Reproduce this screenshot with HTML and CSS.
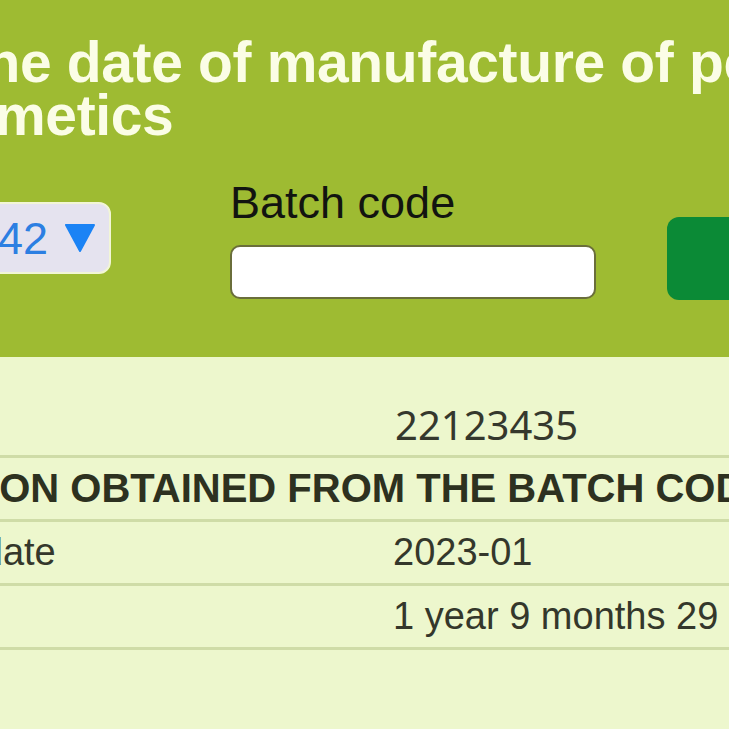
FILE: index.html
```html
<!DOCTYPE html>
<html lang="en">
<head>
<meta charset="utf-8">
<title>Check the date of manufacture</title>
<link rel="stylesheet" href="styles.css">
</head>
<body>
<div class="page">
  <header class="hero">
    <h1 class="title">Check the date of manufacture of perfume<br>and cosmetics</h1>
    <form class="search" onsubmit="return false">
      <div class="select">
        <span class="select-value">Brand 2042</span>
        <svg class="select-arrow" width="30" height="28" viewBox="0 0 30 28"><polygon points="1,1 29,1 15,27" fill="#1b83f5" stroke="#1b83f5" stroke-width="2" stroke-linejoin="round"/></svg>
      </div>
      <div class="field">
        <label class="field-label" for="code">Batch code</label>
        <input class="field-input" id="code" type="text">
      </div>
      <button class="submit" type="submit">Check</button>
    </form>
  </header>
  <div class="results">
    <div class="row">
      <div class="cell label">Batch code</div>
      <div class="cell value mono">22123435</div>
    </div>
    <div class="row">
      <div class="cell head">INFORMATION OBTAINED FROM THE BATCH CODE</div>
    </div>
    <div class="row">
      <div class="cell label">Manufacture date</div>
      <div class="cell value">2023-01</div>
    </div>
    <div class="row">
      <div class="cell label">Age</div>
      <div class="cell value">1 year 9 months 29 days</div>
    </div>
  </div>
</div>
</body>
</html>
```
FILE: styles.css
```css
html, body {
  margin: 0;
  padding: 0;
}
body {
  background: #edf7cd;
  overflow: hidden;
  font-family: "Liberation Sans", Arial, sans-serif;
}
.page {
  margin-left: -240px;
  width: 1240px;
}
.hero {
  background: #9ebb32;
  padding: 36px 0 57px 0;
}
.title {
  margin: 0 0 38px 0;
  padding-left: 22px;
  font-size: 57px;
  line-height: 53px;
  font-weight: bold;
  letter-spacing: -0.35px;
  color: #fbfde6;
  white-space: nowrap;
}
.search {
  display: flex;
  align-items: flex-start;
  padding-left: 80px;
}
.select {
  box-sizing: border-box;
  width: 271px;
  height: 72px;
  margin-top: 22px;
  background: #e5e3ef;
  border: 2px solid #f2f6d6;
  border-radius: 12px;
  display: flex;
  align-items: center;
  justify-content: flex-end;
  padding-right: 14px;
  gap: 17px;
  overflow: hidden;
}
.select-value {
  font-size: 45px;
  color: #2c7fe2;
  white-space: nowrap;
  line-height: 1;
}
.select-arrow {
  flex: none;
  display: block;
}
.field {
  margin-left: 119px;
  display: flex;
  flex-direction: column;
}
.field-label {
  font-size: 45px;
  line-height: 45px;
  color: #121410;
}
.field-input {
  box-sizing: border-box;
  margin-top: 20px;
  width: 366px;
  height: 54px;
  border: 2px solid #6a6e3b;
  border-radius: 10px;
  background: #fff;
  padding: 0 12px;
  font-size: 30px;
  font-family: inherit;
}
.submit {
  margin-left: 71px;
  margin-top: 37px;
  width: 240px;
  height: 83px;
  border: none;
  border-radius: 12px;
  background: #0b8a36;
  color: #fff;
  font-family: inherit;
  font-size: 36px;
  padding: 0 0 0 140px;
  text-align: left;
}
.results {
  margin-top: 37px;
}
.row {
  box-sizing: border-box;
  height: 64px;
  display: grid;
  grid-template-columns: 630px 1fr;
  align-items: center;
  border-bottom: 3px solid #cfdca7;
}
.cell {
  padding-left: 5px;
  font-size: 38px;
  color: #34372b;
  white-space: nowrap;
}
.label {
  padding-left: 0;
}
.value {
  padding-left: 3px;
}
.value.mono {
  padding-left: 5px;
  font-family: "Noto Sans", "Open Sans", sans-serif;
  font-size: 40px;
  color: #35382d;
}
.head {
  grid-column: 1 / span 2;
  padding-left: 20px;
  font-size: 40px;
  font-weight: bold;
  color: #2d3120;
}
```
